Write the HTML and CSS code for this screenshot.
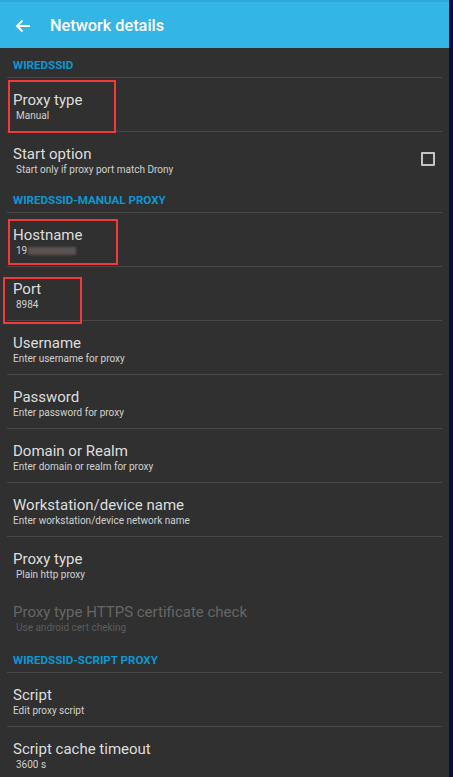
FILE: index.html
```html
<!DOCTYPE html>
<html>
<head>
<meta charset="utf-8">
<link rel="stylesheet" href="styles.css">
</head>
<body>
<div class="screen">
  <div class="app">
    <header class="topbar">
      <svg class="back" width="16" height="14" viewBox="0 0 16 14"><path d="M15 7H2M7.5 1.5L2 7l5.5 5.5" fill="none" stroke="#fff" stroke-width="2"/></svg>
      <span class="title">Network details</span>
    </header>
    <div class="list">
      <div class="section h1">WIREDSSID</div>
      <div class="row div">
        <div class="t">Proxy type</div>
        <div class="s in">Manual</div>
        <span class="mark m1"></span>
      </div>
      <div class="row check">
        <div class="txt">
          <div class="t">Start option</div>
          <div class="s in">Start only if proxy port match Drony</div>
        </div>
        <span class="box"></span>
      </div>
      <div class="section h2">WIREDSSID-MANUAL PROXY</div>
      <div class="row div">
        <div class="t">Hostname</div>
        <div class="s in">19<span class="blur"></span></div>
        <span class="mark m2"></span>
      </div>
      <div class="row div">
        <div class="t">Port</div>
        <div class="s in">8984</div>
        <span class="mark m3"></span>
      </div>
      <div class="row div">
        <div class="t">Username</div>
        <div class="s">Enter username for proxy</div>
      </div>
      <div class="row div">
        <div class="t">Password</div>
        <div class="s">Enter password for proxy</div>
      </div>
      <div class="row div">
        <div class="t">Domain or Realm</div>
        <div class="s">Enter domain or realm for proxy</div>
      </div>
      <div class="row div">
        <div class="t">Workstation/device name</div>
        <div class="s">Enter workstation/device network name</div>
      </div>
      <div class="row">
        <div class="t">Proxy type</div>
        <div class="s in">Plain http proxy</div>
      </div>
      <div class="row disabled">
        <div class="t">Proxy type HTTPS certificate check</div>
        <div class="s in">Use android cert cheking</div>
      </div>
      <div class="section h1">WIREDSSID-SCRIPT PROXY</div>
      <div class="row div">
        <div class="t">Script</div>
        <div class="s">Edit proxy script</div>
      </div>
      <div class="row">
        <div class="t">Script cache timeout</div>
        <div class="s in">3600 s</div>
      </div>
    </div>
  </div>
  <div class="edge"></div>
</div>
</body>
</html>
```
FILE: styles.css
```css
html, body {
  margin: 0;
  padding: 0;
  background: #303030;
  overflow: hidden;
}
body {
  font-family: Roboto, "Noto Sans", sans-serif;
}
.screen {
  display: flex;
  width: 453px;
  height: 777px;
  overflow: hidden;
}
.app {
  width: 449px;
  flex: none;
  background: #303030;
}
.edge {
  flex: 1;
  background: #0c0d38;
}
.topbar {
  height: 46px;
  border-top: 2px solid #2da7d8;
  background: #33b5e5;
  display: flex;
  align-items: center;
  padding-left: 15px;
}
.back {
  display: block;
  margin-top: 1px;
}
.title {
  margin-left: 19px;
  margin-top: 1px;
  color: #fff;
  font-size: 16.3px;
  font-weight: 500;
}
.list {
  margin: 0 7px;
}
.section {
  color: #0b98d0;
  font-weight: 700;
  font-size: 11.6px;
  line-height: 14px;
  padding-left: 6px;
  border-bottom: 1px solid #474747;
}
.section.h1 {
  padding-top: 10px;
  padding-bottom: 5px;
}
.section.h2 {
  padding-top: 8px;
  padding-bottom: 5px;
}
.row {
  position: relative;
  padding: 13px 6px 8px;
  height: 32px;
}
.row.div {
  border-bottom: 1px solid #474747;
}
.row.check {
  display: flex;
  align-items: center;
  justify-content: space-between;
}
.t {
  color: #dedede;
  font-size: 15px;
  line-height: 18px;
}
.s {
  color: #d0d0d0;
  font-size: 10px;
  line-height: 14px;
}
.s.in {
  padding-left: 3px;
}
.disabled .t {
  color: #666666;
}
.disabled .s {
  color: #5c5c5c;
}
.box {
  width: 10px;
  height: 10px;
  border: 2px solid #c4c4c4;
  border-radius: 1px;
  margin-right: 1px;
  margin-top: -5px;
}
.blur {
  display: inline-block;
  width: 48px;
  height: 7px;
  margin-left: 1px;
  vertical-align: -1px;
  background: #585454;
  border-bottom: 1px solid #664444;
  filter: blur(1.2px);
}
.mark {
  position: absolute;
  border: 2px solid #f23a3a;
  pointer-events: none;
}
.m1 {
  left: 1px;
  top: 2px;
  width: 104px;
  height: 49px;
}
.m2 {
  left: 1px;
  top: 6px;
  width: 106px;
  height: 42px;
}
.m3 {
  left: -4px;
  top: 10px;
  width: 75px;
  height: 43px;
}
```
